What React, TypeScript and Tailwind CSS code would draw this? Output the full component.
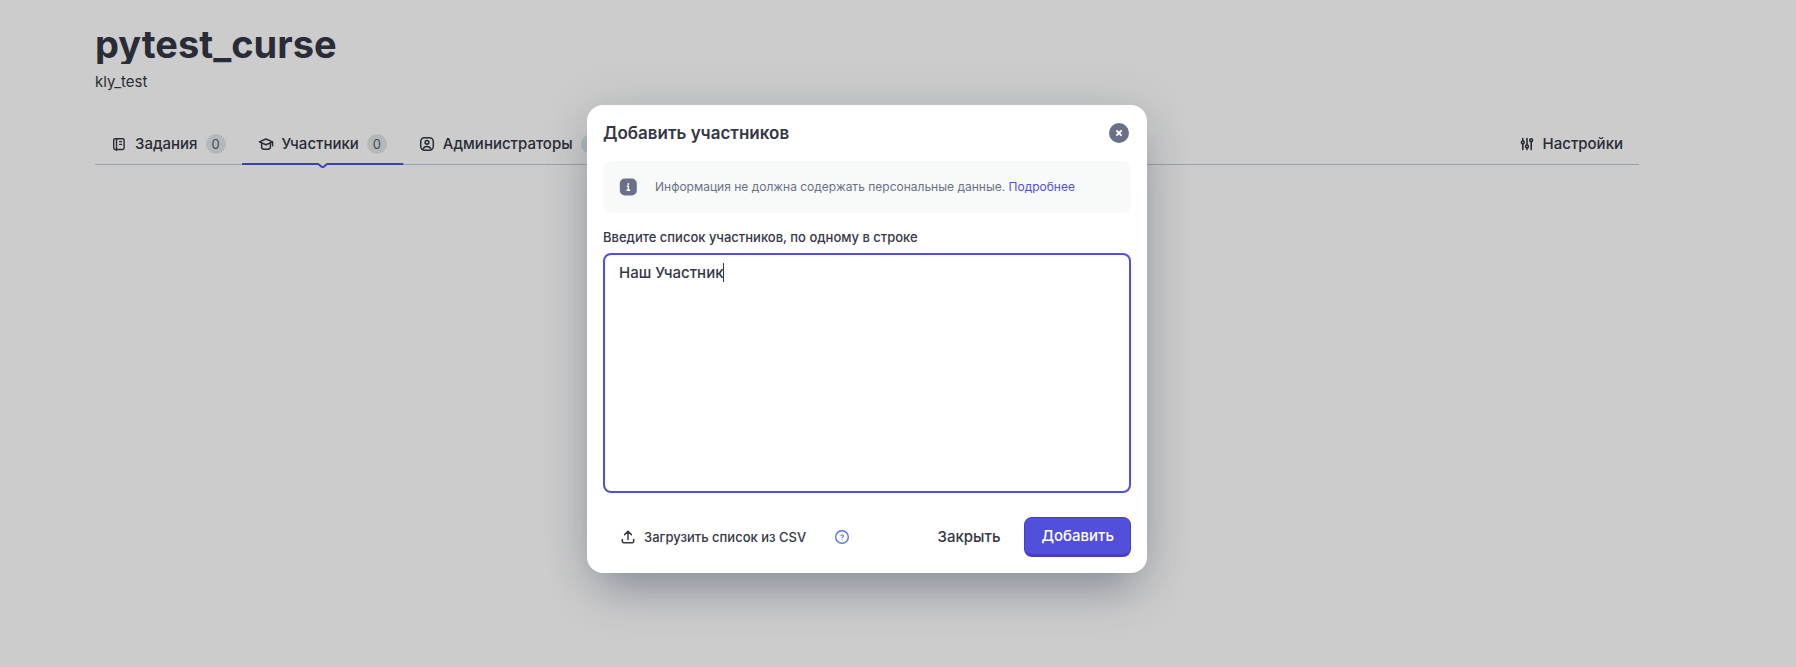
import React, { useEffect, useRef, useState } from "react";

const stroke = {
  fill: "none",
  stroke: "currentColor",
  strokeWidth: 1.5,
  strokeLinecap: "round" as const,
  strokeLinejoin: "round" as const,
};

function BookIcon() {
  return (
    <svg className="size-4 shrink-0" viewBox="0 0 16 16" aria-hidden="true" {...stroke} strokeWidth={1.4}>
      <rect x="2.7" y="2.7" width="10.4" height="10.8" rx="1.4" />
      <path d="M5.5 2.7v11.7M8.6 5.6h2M8.6 8.4h2" />
    </svg>
  );
}

function CapIcon() {
  return (
    <svg className="size-4 shrink-0" viewBox="0 0 16 16" aria-hidden="true" {...stroke}>
      <path d="M8 3 1.4 5.9 8 8.8l6.6-2.9L8 3Z" />
      <path d="M3.6 7.4v3.8c0 1.3 1.8 2.1 4.4 2.1s4.4-.8 4.4-2.1V7.4M14.6 5.9v3.9" />
    </svg>
  );
}

function PersonIcon() {
  return (
    <svg className="size-4 shrink-0" viewBox="0 0 16 16" aria-hidden="true" {...stroke}>
      <rect x="1.7" y="1.7" width="12.6" height="12.6" rx="4" />
      <circle cx="8" cy="6.3" r="1.9" />
      <path d="M4.2 12.6c.6-1.3 2-2 3.8-2s3.2.7 3.8 2" />
    </svg>
  );
}

function SlidersIcon() {
  return (
    <svg className="size-4 shrink-0" viewBox="0 0 16 16" aria-hidden="true" {...stroke} strokeWidth={1.6}>
      <path d="M3.8 2.6v2M3.8 7.8v5.8M8 2.6v6.2M8 12.2v1.4M12.2 5.8v7.8" />
      <circle cx="3.8" cy="6.4" r="1.4" />
      <circle cx="8" cy="10.4" r="1.4" />
      <circle cx="12.2" cy="4.2" r="1.4" />
    </svg>
  );
}

function UploadIcon() {
  return (
    <svg className="size-4 shrink-0" viewBox="0 0 16 16" aria-hidden="true" {...stroke}>
      <path d="M8 10.4V2.6M4.6 5.6 8 2.2l3.4 3.4M2.3 10.4v1.8c0 .9.6 1.5 1.5 1.5h8.4c.9 0 1.5-.6 1.5-1.5v-1.8" />
    </svg>
  );
}

function HelpIcon() {
  return (
    <svg className="size-4" viewBox="0 0 16 16" aria-hidden="true" {...stroke} strokeWidth={1.4}>
      <circle cx="8" cy="8" r="6.3" />
      <path d="M7 6.4c.9-.8 2.5-.5 2.5.7 0 .9-1.2 1-1.4 1.8M8 10.7v.1" strokeWidth={1.1} />
    </svg>
  );
}

function InfoIcon() {
  return (
    <svg className="size-[18px] shrink-0" viewBox="0 0 18 18" aria-hidden="true">
      <rect x="0.8" y="0.5" width="17" height="17" rx="5" fill="#6a7186" />
      <path d="M7.8 8.2h1.6v3.8M7.6 12.3h3.6" fill="none" stroke="#fff" strokeWidth="1.4" />
      <circle cx="9.3" cy="6" r="0.9" fill="#fff" />
    </svg>
  );
}

function Badge({ children }: { children: React.ReactNode }) {
  return (
    <span className="grid h-5 min-w-5 place-items-center rounded-full bg-[#e0e7eb] px-1 text-[13px] leading-5 font-normal text-[#575c6b]">
      {children}
    </span>
  );
}

type TabProps = { icon: React.ReactNode; label: string; count?: number; active?: boolean };

function Tab({ icon, label, count, active }: TabProps) {
  return (
    <a
      href="#"
      aria-current={active ? "page" : undefined}
      className="relative flex h-10 items-center gap-2 px-4 text-[15px] leading-6 font-medium"
    >
      {icon}
      {label}
      {count !== undefined && <Badge>{count}</Badge>}
      {active && (
        <svg className="absolute top-full left-0 -mt-px h-1.5 w-full overflow-visible text-[#5250db]" aria-hidden="true">
          <rect width="100%" height="2" fill="currentColor" />
          <svg x="50%" overflow="visible">
            <path d="M-5 0H5V2H-5Z" fill="#fff" />
            <path
              d="M-6 1h1.2q.6 0 1 .4L-.7 4q.7.5 1.4 0L3.8 1.4q.4-.4 1-.4H6"
              fill="none"
              stroke="currentColor"
              strokeWidth="2"
            />
          </svg>
        </svg>
      )}
    </a>
  );
}

export default function App() {
  const [names, setNames] = useState("Наш Участник");
  const [edited, setEdited] = useState(false);
  const field = useRef<HTMLTextAreaElement>(null);

  useEffect(() => {
    const el = field.current;
    if (!el) return;
    el.focus();
    el.setSelectionRange(el.value.length, el.value.length);
  }, []);

  return (
    <div className="relative min-h-screen bg-white font-['Inter','Noto_Sans',sans-serif] text-[#343745]">
      <div className="pr-[157px] pl-[95px]">
        <header className="pt-6">
          <h1 className="overflow-hidden text-[38px] leading-10 font-bold">pytest_curse</h1>
          <p className="pt-1.5 text-[15px] leading-6">kly_test</p>
        </header>
        <nav className="mt-[30px] flex justify-between border-b border-[#bfcbd8]">
          <div className="flex">
            <Tab icon={<BookIcon />} label="Задания" count={0} />
            <Tab icon={<CapIcon />} label="Участники" count={0} active />
            <Tab icon={<PersonIcon />} label="Администраторы" count={1} />
          </div>
          <Tab icon={<SlidersIcon />} label="Настройки" />
        </nav>
      </div>

      <div className="absolute inset-0 flex items-start justify-center bg-black/20 pt-[105px] pr-[62px]">
        <section
          role="dialog"
          aria-labelledby="dialog-title"
          className="w-full max-w-[560px] rounded-2xl bg-white p-4 shadow-[0_24px_48px_-12px_rgba(52,64,92,0.45),0_0_48px_rgba(52,64,72,0.12)]"
        >
          <div className="flex h-6 items-center justify-between">
            <h2 id="dialog-title" className="text-[17px] leading-6 font-semibold">
              Добавить участников
            </h2>
            <button
              type="button"
              aria-label="Закрыть окно"
              className="mr-0.5 grid size-5 place-items-center rounded-full bg-[#6a7186] text-white"
            >
              <svg className="size-5" viewBox="0 0 20 20" aria-hidden="true">
                <path d="m7.4 7.4 5.2 5.2M12.6 7.4l-5.2 5.2" stroke="currentColor" strokeWidth="2" />
              </svg>
            </button>
          </div>

          <div className="mt-4 flex h-[52px] items-center gap-[18px] rounded-lg bg-[#f8faf9] px-4 text-xs leading-5 text-[#6a7186]">
            <InfoIcon />
            <p>
              Информация не должна содержать персональные данные.{" "}
              <a href="#" className="text-[#5250db]">
                Подробнее
              </a>
            </p>
          </div>

          <label htmlFor="names" className="mt-3.5 block text-[13px] leading-5 font-medium">
            Введите список участников, по одному в строке
          </label>
          <div className="relative mt-1.5">
            <textarea
              id="names"
              ref={field}
              value={names}
              onChange={(e) => {
                setNames(e.target.value);
                setEdited(true);
              }}
              className={`block h-60 w-full resize-none rounded-lg border-2 border-[#5250db] bg-white px-3.5 py-1.5 text-[15px] leading-6 font-medium outline-none ${edited ? "" : "caret-transparent"}`}
            />
            {!edited && <span className="absolute top-2.5 left-[120px] h-[19px] w-px bg-[#343745]" />}
          </div>

          <div className="mt-6 flex h-10 items-center">
            <button type="button" className="flex items-center gap-2 pl-[17px] text-[13px] leading-5 font-medium">
              <UploadIcon />
              Загрузить список из CSV
            </button>
            <button type="button" aria-label="Справка" className="ml-7 text-[#5b6fe8]">
              <HelpIcon />
            </button>
            <button type="button" className="ml-auto h-10 px-6 text-[15px] leading-6 font-medium">
              Закрыть
            </button>
            <button
              type="button"
              className="h-10 rounded-lg border border-b-[3px] border-[#4b3cc4] bg-[#5250db] px-4 text-[15px] leading-6 font-medium text-white"
            >
              Добавить
            </button>
          </div>
        </section>
      </div>
    </div>
  );
}
